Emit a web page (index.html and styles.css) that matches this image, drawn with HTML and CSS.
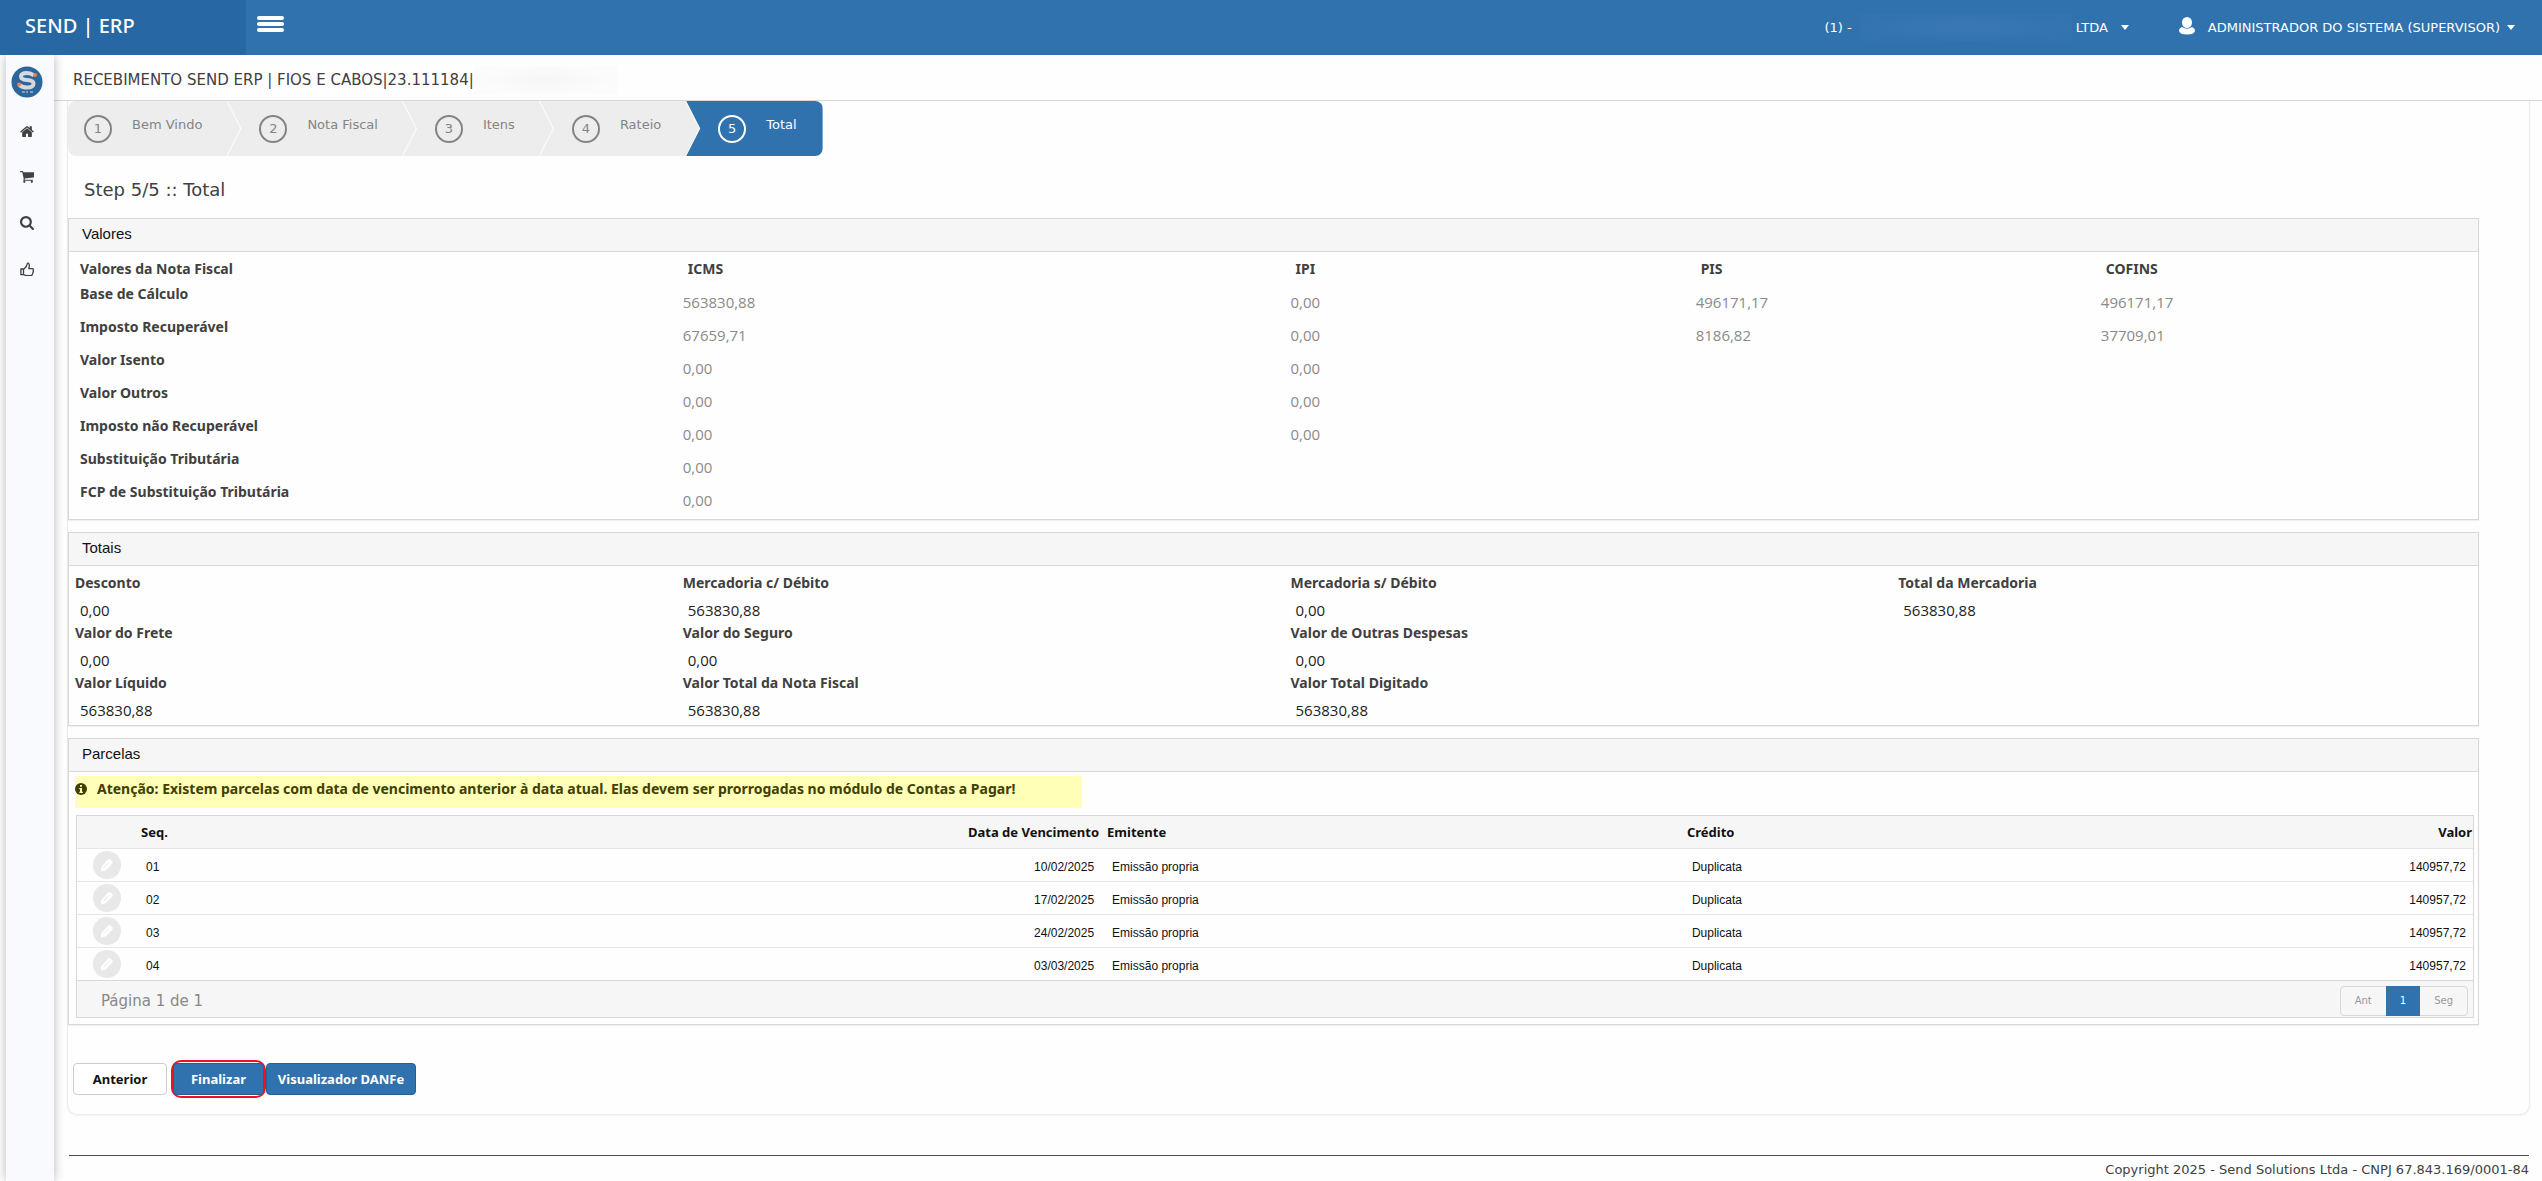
FILE: index.html
```html
<!DOCTYPE html>
<html lang="pt-BR">
<head>
<meta charset="utf-8">
<title>SEND | ERP</title>
<link rel="stylesheet" href="styles.css">
</head>
<body>
<header class="topbar">
  <a class="brand" href="#">SEND | ERP</a>
  <button class="menu-toggle" aria-label="Menu"><span></span><span></span><span></span></button>
  <nav class="top-links">
    <a class="company" href="#">(1) - <span class="redacted redacted-blue"></span>LTDA <i class="caret"></i></a>
    <a class="user" href="#"><svg class="user-icon" viewBox="0 0 16 18"><ellipse cx="8" cy="5.5" rx="5" ry="5.5" fill="#fff"/><path d="M3 10Q0 11 0 14Q1 17.500 8 17.500Q15 17.500 16 14Q16 11 13 10Q8 13.500 3 10Z" fill="#fff"/></svg>ADMINISTRADOR DO SISTEMA (SUPERVISOR) <i class="caret"></i></a>
  </nav>
</header>
<div class="shell">
  <aside class="sidebar">
    <a href="#" aria-label="Send ERP"><svg class="logo" viewBox="0 0 32 32"><circle cx="16" cy="16" r="15.500" fill="#2c669b"/><path d="M23 9.500Q20 7 16 7Q10 7 10 10.500Q10 13.500 16 14Q22.500 14.500 22.500 17.500Q22.500 21.500 16 21.500Q11 21.500 8.500 19" fill="none" stroke="#d5d9de" stroke-width="4"/><circle cx="24" cy="9" r="2" fill="#ee8446"/><circle cx="8" cy="18.500" r="2" fill="#ee8446"/><path d="M11 26h3M15 26h2M19 26h3" stroke="#7fa0c0" stroke-width="2"/></svg></a>
    <a href="#" aria-label="Início"><svg class="side-icon" viewBox="0 0 1664 1664"><path fill="#3f4245" d="M1408 992v480q0 26-19 45t-45 19H960v-384H704v384H320q-26 0-45-19t-19-45V992l575-474q1-1 1-3l576 474zm223-69l-62 74q-8 9-21 11h-3q-13 0-21-7L832 424l-692 577q-12 8-24 7-13-2-21-11l-62-74q-8-10-7-23.500t11-21.500l719-599q32-26 76-26t76 26l244 204V288q0-14 9-23t23-9h192q14 0 23 9t9 23v408l219 182q10 8 11 21.500t-7 23.500z"/></svg></a>
    <a href="#" aria-label="Compras"><svg class="side-icon" viewBox="0 0 1664 1664"><path fill="#3f4245" d="M640 1408q0 52-38 90t-90 38-90-38-38-90 38-90 90-38 90 38 38 90zm896 0q0 52-38 90t-90 38-90-38-38-90 38-90 90-38 90 38 38 90zm128-1088v512q0 24-16.500 42.500T1607 896L563 1018q13 60 13 70 0 16-24 64h920q26 0 45 19t19 45-19 45-45 19H448q-26 0-45-19t-19-45q0-11 8-31.500t16-36 21.500-40T445 1079L268 256H64q-26 0-45-19T0 192t19-45 45-19h256q16 0 28.500 6.500T368 150t13 24.500 8 26 5.500 29.500 4.500 26h1201q26 0 45 19t19 45z"/></svg></a>
    <a href="#" aria-label="Pesquisar"><svg class="side-icon" viewBox="0 0 1664 1664"><path fill="#3f4245" d="M1152 704q0-185-131.500-316.500T704 256 387.500 387.500 256 704t131.500 316.500T704 1152t316.500-131.500T1152 704zm512 832q0 52-38 90t-90 38q-54 0-90-38l-343-342q-179 124-399 124-143 0-273.500-55.500t-225-150-150-225T0 704t55.500-273.500 150-225 225-150T704 0t273.500 55.500 225 150 150 225T1408 704q0 220-124 399l343 343q37 37 37 90z"/></svg></a>
    <a href="#" aria-label="Aprovar"><svg class="side-icon" viewBox="0 0 16 16"><path d="M1 8h3v6.500h-3zM4 14.500l3 1h5.500q1.500 0 1.500-1.500 1-.5.7-2 .8-1 .3-2 .8-2.500-1-2.500h-4q1-2 .5-4.500t-2-1.500q-.5 3.500-4 6.500" fill="none" stroke="#3f4245" stroke-width="1.500" stroke-linejoin="round"/></svg></a>
  </aside>
  <div class="page">
    <h1 class="page-title">RECEBIMENTO SEND ERP | FIOS E CABOS|23.111184|<span class="redacted redacted-grey"></span></h1>
    <main class="card">
      <ol class="wizard">
        <li><b>1</b><span>Bem Vindo</span></li>
        <li><b>2</b><span>Nota Fiscal</span></li>
        <li><b>3</b><span>Itens</span></li>
        <li><b>4</b><span>Rateio</span></li>
        <li class="active"><b>5</b><span>Total</span></li>
      </ol>
      <h2 class="step-title">Step 5/5 :: Total</h2>

      <section class="panel">
        <h3>Valores</h3>
        <table class="taxes">
          <colgroup><col class="w3"><col class="w3"><col class="w2"><col class="w2"><col class="w2"></colgroup>
          <thead><tr><th>Valores da Nota Fiscal</th><th>ICMS</th><th>IPI</th><th>PIS</th><th>COFINS</th></tr></thead>
          <tbody>
            <tr><th>Base de Cálculo</th><td>563830,88</td><td>0,00</td><td>496171,17</td><td>496171,17</td></tr>
            <tr><th>Imposto Recuperável</th><td>67659,71</td><td>0,00</td><td>8186,82</td><td>37709,01</td></tr>
            <tr><th>Valor Isento</th><td>0,00</td><td>0,00</td><td></td><td></td></tr>
            <tr><th>Valor Outros</th><td>0,00</td><td>0,00</td><td></td><td></td></tr>
            <tr><th>Imposto não Recuperável</th><td>0,00</td><td>0,00</td><td></td><td></td></tr>
            <tr><th>Substituição Tributária</th><td>0,00</td><td></td><td></td><td></td></tr>
            <tr><th>FCP de Substituição Tributária</th><td>0,00</td><td></td><td></td><td></td></tr>
          </tbody>
        </table>
      </section>

      <section class="panel">
        <h3>Totais</h3>
        <dl class="totals">
          <div><dt>Desconto</dt><dd>0,00</dd></div>
          <div><dt>Mercadoria c/ Débito</dt><dd>563830,88</dd></div>
          <div><dt>Mercadoria s/ Débito</dt><dd>0,00</dd></div>
          <div><dt>Total da Mercadoria</dt><dd>563830,88</dd></div>
          <div><dt>Valor do Frete</dt><dd>0,00</dd></div>
          <div><dt>Valor do Seguro</dt><dd>0,00</dd></div>
          <div class="last"><dt>Valor de Outras Despesas</dt><dd>0,00</dd></div>
          <div><dt>Valor Líquido</dt><dd>563830,88</dd></div>
          <div><dt>Valor Total da Nota Fiscal</dt><dd>563830,88</dd></div>
          <div><dt>Valor Total Digitado</dt><dd>563830,88</dd></div>
        </dl>
      </section>

      <section class="panel">
        <h3>Parcelas</h3>
        <p class="notice"><svg class="info" viewBox="0 0 12 12"><circle cx="6" cy="6" r="6" fill="#404000"/><path d="M5 2h2v1.700H5zM4.300 5H7v3.800h.8V10H4.300V8.800H5V6.200h-.7z" fill="#ffffb7"/></svg>Atenção: Existem parcelas com data de vencimento anterior à data atual. Elas devem ser prorrogadas no módulo de Contas a Pagar!</p>
        <div class="grid-box">
          <table class="grid">
            <colgroup><col class="c-edit"><col class="c-seq"><col class="c-date"><col class="c-emit"><col class="c-cred"><col class="c-val"></colgroup>
            <thead><tr><th></th><th>Seq.</th><th class="num">Data de Vencimento</th><th>Emitente</th><th>Crédito</th><th class="num">Valor</th></tr></thead>
            <tbody>
              <tr><td><button class="edit" aria-label="Editar parcela 01" disabled><svg viewBox="0 0 14 14"><path d="M1 9.500L8 1.500Q9.500 .5 11 2L12.500 3.500Q13 5 12 6L5.500 12.500L1 13.500Z" fill="#fff"/><path d="M3.500 10L9 4.500" stroke="#e8e8e8"/></svg></button></td><td>01</td><td class="num">10/02/2025</td><td>Emissão propria</td><td>Duplicata</td><td class="num">140957,72</td></tr>
              <tr><td><button class="edit" aria-label="Editar parcela 02" disabled><svg viewBox="0 0 14 14"><path d="M1 9.500L8 1.500Q9.500 .5 11 2L12.500 3.500Q13 5 12 6L5.500 12.500L1 13.500Z" fill="#fff"/><path d="M3.500 10L9 4.500" stroke="#e8e8e8"/></svg></button></td><td>02</td><td class="num">17/02/2025</td><td>Emissão propria</td><td>Duplicata</td><td class="num">140957,72</td></tr>
              <tr><td><button class="edit" aria-label="Editar parcela 03" disabled><svg viewBox="0 0 14 14"><path d="M1 9.500L8 1.500Q9.500 .5 11 2L12.500 3.500Q13 5 12 6L5.500 12.500L1 13.500Z" fill="#fff"/><path d="M3.500 10L9 4.500" stroke="#e8e8e8"/></svg></button></td><td>03</td><td class="num">24/02/2025</td><td>Emissão propria</td><td>Duplicata</td><td class="num">140957,72</td></tr>
              <tr><td><button class="edit" aria-label="Editar parcela 04" disabled><svg viewBox="0 0 14 14"><path d="M1 9.500L8 1.500Q9.500 .5 11 2L12.500 3.500Q13 5 12 6L5.500 12.500L1 13.500Z" fill="#fff"/><path d="M3.500 10L9 4.500" stroke="#e8e8e8"/></svg></button></td><td>04</td><td class="num">03/03/2025</td><td>Emissão propria</td><td>Duplicata</td><td class="num">140957,72</td></tr>
            </tbody>
          </table>
          <div class="pager">
            <span>Página 1 de 1</span>
            <nav class="pages"><button>Ant</button><button class="current">1</button><button>Seg</button></nav>
          </div>
        </div>
      </section>

      <div class="actions">
        <button class="btn">Anterior</button>
        <span class="highlight"><button class="btn primary">Finalizar</button></span>
        <button class="btn primary wide">Visualizador DANFe</button>
      </div>
    </main>
    <footer class="footer">Copyright 2025 - Send Solutions Ltda - CNPJ 67.843.169/0001-84</footer>
  </div>
</div>
</body>
</html>
```
FILE: styles.css
```css
* { box-sizing: border-box; }

body {
  margin: 0;
  background: #fefefe;
  color: #404040;
  font: 13px/20px "DejaVu Sans", Verdana, sans-serif;
}

a { color: inherit; text-decoration: none; }
h1, h2, h3, p, dl, dd, ol { margin: 0; padding: 0; font-weight: normal; }
table { border-collapse: collapse; }
button { font: inherit; cursor: pointer; }

.topbar {
  display: flex;
  height: 55px;
  background: #3072ae;
  color: #fff;
}
.brand {
  width: 246px;
  padding: 12px 25px;
  background: #2768a4;
  font: 500 20px/28px "Noto Sans", "Open Sans", sans-serif;
}
.menu-toggle {
  display: flex;
  flex-direction: column;
  gap: 2px;
  padding: 16px 11px;
  border: 0;
  background: none;
}
.menu-toggle span {
  width: 27px;
  height: 4px;
  border-radius: 2px;
  background: #fff;
}
.top-links {
  display: flex;
  align-items: center;
  gap: 50px;
  margin-left: auto;
  padding-right: 27px;
}
.top-links a { display: flex; align-items: center; }
.caret {
  margin-left: 7px;
  border: 4px solid transparent;
  border-top: 5px solid #fff;
  border-bottom: 0;
}
.company .caret { margin-left: 13px; }
.user-icon { width: 16px; height: 18px; margin: 0 13px 4px 0; }
.redacted { display: inline-block; }
.redacted-blue {
  width: 212px;
  height: 27px;
  margin: 0 4px 0 8px;
  background: radial-gradient(closest-side, #3a78b4, #3374b0);
}
.redacted-grey {
  width: 144px;
  height: 28px;
  background: radial-gradient(closest-side, #f6f6f6, #fcfcfc);
}

.shell { display: flex; min-height: calc(100vh - 55px); }
.sidebar {
  display: flex;
  flex: 0 0 48px;
  flex-direction: column;
  align-items: center;
  margin-left: 6px;
  background: #f8fafd;
  box-shadow: 0 0 10px rgba(0, 0, 0, .28);
  clip-path: inset(0 -12px 0 -6px);
}
.sidebar a {
  display: flex;
  align-items: center;
  height: 46px;
  margin-right: 6px;
}
.sidebar a:first-child { height: 53px; }
.logo { width: 32px; height: 32px; }
.side-icon { width: 14px; height: 14px; }

.page { flex: 1; min-width: 0; }
.page-title {
  display: flex;
  align-items: center;
  height: 46px;
  padding: 4px 0 0 19px;
  border-bottom: 1px solid #d8d8d8;
  font-size: 15px;
}
.card {
  margin: 0 12px 0 13px;
  padding-bottom: 16px;
  border: 1px solid #ebebeb;
  border-top: 0;
  border-radius: 0 0 10px 10px;
  box-shadow: 0 1px 2px rgba(0, 0, 0, .05);
}

.wizard { display: flex; list-style: none; }
.wizard li {
  display: flex;
  height: 55px;
  margin-right: -14px;
  padding: 14px 39px 0 32px;
  background: #ededed;
  color: #848484;
  clip-path: polygon(0 0, calc(100% - 15px) 0, calc(100% - 1px) 50%, calc(100% - 15px) 100%, 0 100%, 14px 50%);
}
.wizard li:first-child {
  padding-left: 16px;
  border-radius: 8px 0 0 8px;
  clip-path: polygon(0 0, calc(100% - 15px) 0, calc(100% - 1px) 50%, calc(100% - 15px) 100%, 0 100%);
}
.wizard li.active {
  margin-right: 0;
  padding-right: 26px;
  border-radius: 0 8px 8px 0;
  background: #3072ae;
  color: #fff;
  clip-path: polygon(0 0, 100% 0, 100% 100%, 0 100%, 14px 50%);
}
.wizard b {
  width: 28px;
  height: 28px;
  margin-right: 20px;
  border: 2px solid currentColor;
  border-radius: 50%;
  font-weight: normal;
  line-height: 24px;
  text-align: center;
}
.step-title {
  padding: 21px 16px 15px;
  font-size: 18px;
  line-height: 26px;
}

.panel {
  margin: 0 50px 12px 0;
  border: 1px solid #d8d8d8;
  box-shadow: 0 1px 1px rgba(0, 0, 0, .05);
}
.panel h3 {
  height: 33px;
  padding-left: 13px;
  border-bottom: 1px solid #d8d8d8;
  background: #f6f6f6;
  color: #111;
  font: 15px/30px "Liberation Sans", Arial, sans-serif;
}

.taxes, .totals {
  font: 15px/20px "Open Sans", sans-serif;
}
.taxes {
  width: calc(100% + 22px);
  margin: 0 -28px 4px 6px;
  table-layout: fixed;
}
.w3 { width: 25%; }
.w2 { width: 16.666%; }
.taxes th, .totals dt {
  color: #404040;
  font: bold 14px/20px "Noto Sans", sans-serif;
}
.taxes th { padding: 0 5px; text-align: left; vertical-align: top; }
.taxes thead th { height: 32px; padding-top: 7px; }
.taxes td { height: 33px; padding: 8px 0 5px; color: #8a8a8a; }

.totals {
  display: grid;
  grid-template-columns: repeat(4, 1fr);
  margin: 0 -28px 0 6px;
  padding: 7px 0 2px;
}
.totals div { height: 50px; }
.totals .last { grid-column-end: span 2; }
.totals dd { margin: 7px 0 0 5px; color: #222; }

.notice {
  display: flex;
  width: 1007px;
  max-width: 100%;
  height: 32px;
  margin: 4px 0 7px 6px;
  padding-top: 3px;
  background: #ffffb7;
  color: #404000;
  font: bold 14px/20px "Noto Sans", sans-serif;
}
.info { width: 12px; height: 12px; margin: 4px 10px 0 0; }

.grid-box { margin: 0 4px 6px 7px; border: 1px solid #d8d8d8; }
.grid { width: 100%; table-layout: fixed; color: #111; font: 12px/20px "Liberation Sans", Arial, sans-serif; }
.c-edit { width: 60px; }
.c-seq { width: 70px; }
.c-date { width: 37.4%; }
.c-emit { width: 24.2%; }
.grid th { height: 32px; padding: 0 4px; background: #f6f6f6; font: bold 13px/20px "Noto Sans", sans-serif; text-align: left; }
.grid th:last-child { padding-right: 1px; }
.grid td { height: 33px; padding: 4px 9px 0; border-top: 1px solid #e6e6e6; }
.grid td:first-child { padding: 0 16px; }
.grid .num { text-align: right; }
.grid td:last-child { padding-right: 7px; }
.edit {
  display: grid;
  place-items: center;
  width: 28px;
  height: 28px;
  padding: 0;
  border: 0;
  border-radius: 50%;
  background: #e8e8e8;
}
.edit svg { width: 14px; height: 14px; }
.pager {
  display: flex;
  justify-content: space-between;
  align-items: center;
  height: 37px;
  padding: 3px 5px 0 24px;
  border-top: 1px solid #d8d8d8;
  background: #f6f6f6;
  color: #888;
  font-size: 15px;
}
.pages { display: flex; height: 30px; border: 1px solid #d8d8d8; border-radius: 4px; font-size: 10px; }
.pages button { padding: 0 14px; border: 0; background: none; color: #999; }
.pages .current { margin: -1px 0; background: #3072ae; color: #fff; }

.actions { display: flex; align-items: center; margin: 35px 0 0 5px; }
.btn {
  height: 32px;
  width: 94px;
  border: 1px solid #ccc;
  border-radius: 4px;
  background: #fff;
  color: #111;
  font: bold 13px/20px "Noto Sans", sans-serif;
}
.btn.primary { border-color: #245f97; background: #3072ae; color: #fff; }
.btn.wide { width: 150px; padding: 0; }
.highlight {
  display: flex;
  align-items: center;
  width: 95px;
  height: 38px;
  margin-left: 4px;
  border: 2px solid #f01020;
  border-radius: 10px;
}
.highlight .btn { flex: 1; min-width: 0; padding: 0; }

.footer {
  margin: 40px 13px 0 15px;
  padding-top: 4px;
  border-top: 1px solid #505050;
  text-align: right;
}
```
